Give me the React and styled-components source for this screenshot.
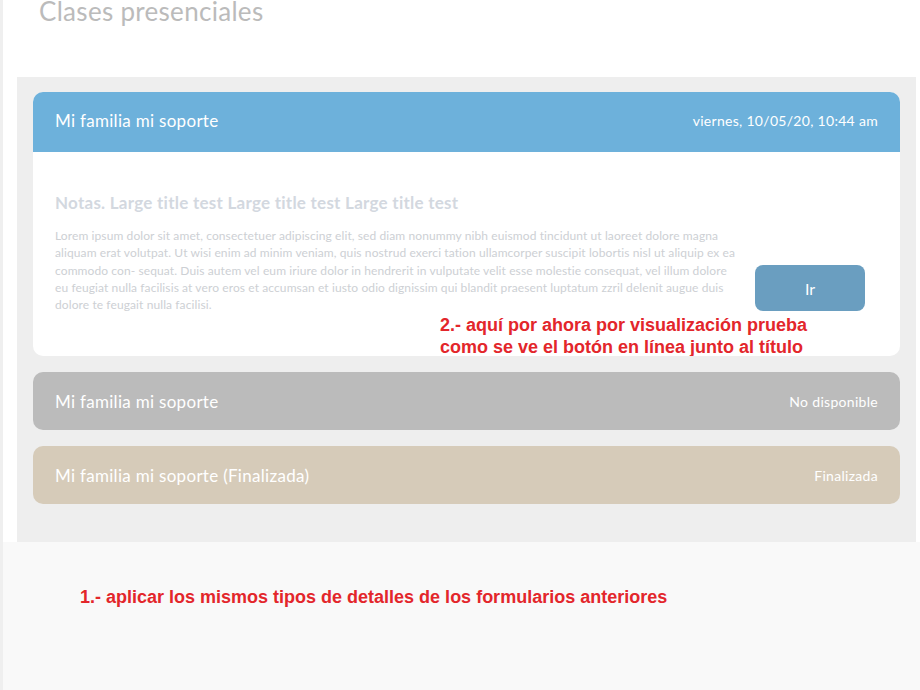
import styled, { createGlobalStyle } from 'styled-components'

const GlobalStyle = createGlobalStyle`
  html, body {
    margin: 0;
    padding: 0;
    background: #fff;
  }
  body {
    font-family: Lato, "Open Sans", sans-serif;
  }
`

const Page = styled.div`
  display: flex;
  width: 920px;
  height: 690px;
  overflow: hidden;
`

const Rail = styled.div`
  width: 3px;
  background: #efefef;
  flex-shrink: 0;
`

const Main = styled.div`
  flex: 1;
  display: flex;
  flex-direction: column;
`

const PageTitle = styled.h1`
  margin: 0;
  height: 77px;
  padding-left: 36px;
  font-size: 26px;
  line-height: 22px;
  letter-spacing: 0.3px;
  font-weight: 400;
  color: #bbbbbb;
`

const Panel = styled.div`
  margin: 0 4px 0 14px;
  padding: 15px 16px 38px;
  background: #eeeeee;
  display: flex;
  flex-direction: column;
  gap: 16px;
`

const Card = styled.div`
  position: relative;
  border-radius: 10px;
  overflow: hidden;
  background: #fff;
`

const CardHeader = styled.div`
  height: ${p => p.$tall ? 60 : 58}px;
  box-sizing: border-box;
  padding: 0 22px ${p => p.$tall ? 3 : 0}px;
  display: flex;
  align-items: center;
  justify-content: space-between;
  background: ${p => p.$bg};
  color: #fff;
`

const CardTitle = styled.span`
  font-size: 17px;
  letter-spacing: 0.3px;
`

const CardMeta = styled.span`
  font-size: 14px;
  letter-spacing: 0.3px;
`

const CardBody = styled.div`
  height: 204px;
  box-sizing: border-box;
  padding: 41px 35px 0 22px;
`

const NoteTitle = styled.h2`
  margin: 0 0 14px;
  font-size: 17px;
  line-height: 20px;
  letter-spacing: 0.25px;
  font-weight: 700;
  color: #d3d8df;
`

const NoteRow = styled.div`
  display: flex;
  align-items: flex-end;
  gap: 14px;
`

const NoteText = styled.p`
  margin: 0;
  flex: 1;
  font-size: 12px;
  line-height: 17.3px;
  letter-spacing: 0.1px;
  color: #cdd0d4;
`

const GoButton = styled.button`
  flex-shrink: 0;
  width: 110px;
  height: 46px;
  margin-bottom: 2px;
  border: none;
  border-radius: 8px;
  background: #6a9ec0;
  color: #fff;
  font-family: inherit;
  font-size: 16px;
`

const Annotation = styled.div`
  font-family: "Liberation Sans", Arial, sans-serif;
  font-weight: 700;
  font-size: 18px;
  line-height: 22px;
  color: #e3262b;
`

const FloatingNote = styled(Annotation)`
  position: absolute;
  left: 407px;
  top: 222px;
`

const Footer = styled.div`
  flex: 1;
  background: #f9f9f9;
  padding: 44px 0 0 77px;
`

const cards = [
  { title: 'Mi familia mi soporte', meta: 'No disponible', bg: '#bbbbbb' },
  { title: 'Mi familia mi soporte (Finalizada)', meta: 'Finalizada', bg: '#d6cbb9' },
]

export default function App() {
  return <>
    <GlobalStyle />
    <Page>
      <Rail />
      <Main>
        <PageTitle>Clases presenciales</PageTitle>
        <Panel>
          <Card>
            <CardHeader $tall $bg="#6db1db">
              <CardTitle>Mi familia mi soporte</CardTitle>
              <CardMeta>viernes, 10/05/20, 10:44 am</CardMeta>
            </CardHeader>
            <CardBody>
              <NoteTitle>Notas. Large title test Large title test Large title test</NoteTitle>
              <NoteRow>
                <NoteText>
                  Lorem ipsum dolor sit amet, consectetuer adipiscing elit, sed diam nonummy nibh euismod tincidunt ut laoreet dolore magna aliquam erat volutpat. Ut wisi enim ad minim veniam, quis nostrud exerci tation ullamcorper suscipit lobortis nisl ut aliquip ex ea commodo con- sequat. Duis autem vel eum iriure dolor in hendrerit in vulputate velit esse molestie consequat, vel illum dolore eu feugiat nulla facilisis at vero eros et accumsan et iusto odio dignissim qui blandit praesent luptatum zzril delenit augue duis dolore te feugait nulla facilisi.
                </NoteText>
                <GoButton>Ir</GoButton>
              </NoteRow>
            </CardBody>
            <FloatingNote>
              2.- aquí por ahora por visualización prueba<br />
              como se ve el botón en línea junto al título
            </FloatingNote>
          </Card>
          {cards.map(c => (
            <Card key={c.title}>
              <CardHeader $bg={c.bg}>
                <CardTitle>{c.title}</CardTitle>
                <CardMeta>{c.meta}</CardMeta>
              </CardHeader>
            </Card>
          ))}
        </Panel>
        <Footer>
          <Annotation>1.- aplicar los mismos tipos de detalles de los formularios anteriores</Annotation>
        </Footer>
      </Main>
    </Page>
  </>
}
